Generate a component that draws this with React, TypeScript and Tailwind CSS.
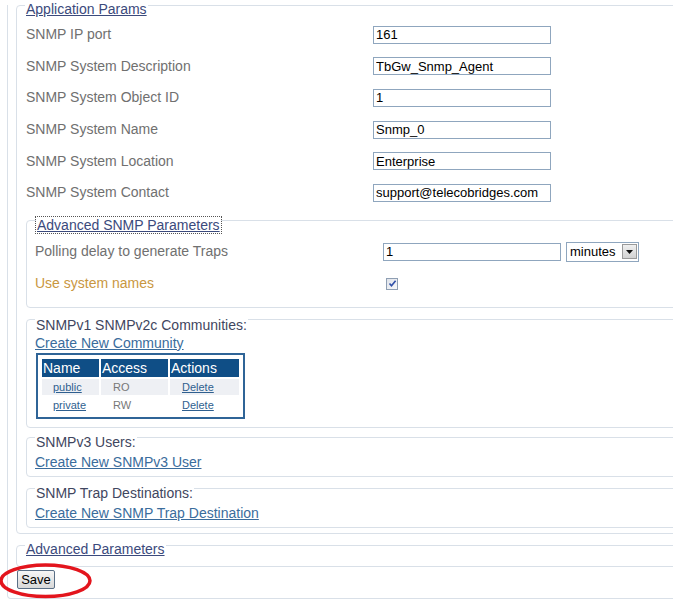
import type { ReactNode } from 'react'

const appRows: [string, string][] = [
  ['SNMP IP port', '161'],
  ['SNMP System Description', 'TbGw_Snmp_Agent'],
  ['SNMP System Object ID', '1'],
  ['SNMP System Name', 'Snmp_0'],
  ['SNMP System Location', 'Enterprise'],
  ['SNMP System Contact', 'support@telecobridges.com'],
]

const communities = [
  { name: 'public', access: 'RO' },
  { name: 'private', access: 'RW' },
]

function TextBox({ value }: { value: string }) {
  return (
    <input
      readOnly
      value={value}
      className="h-[18px] w-[178px] border border-[#8fa6be] bg-white px-[2px] text-[13px] leading-none text-black outline-none"
    />
  )
}

function Box({ className, children }: { className: string; children: ReactNode }) {
  return <section className={'rounded-[4px] border border-[#d9e0e8] ' + className}>{children}</section>
}

function SubBox({ title, link, top }: { title: string; link: string; top: string }) {
  return (
    <Box className={'ml-[9px] pb-[6px] ' + top}>
      <div className="-mt-[4px] ml-[8px] w-fit bg-white px-[1px] text-[14px] leading-[16px] text-[#3f4660]">{title}</div>
      <a className="mt-[4px] block w-fit pl-[8px] text-[14px] leading-[16px] text-[#3a6c9c] underline">{link}</a>
    </Box>
  )
}

export default function App() {
  return (
    <div className="relative h-[600px] w-[673px] overflow-hidden bg-white font-['Liberation_Sans',Arial,sans-serif]">
      <div className="ml-[7px] w-[720px] rounded-b-[4px] border-x border-b border-[#d9e0e8] pb-[9px] pl-[8px]">
        <Box className="mt-[5px] pb-[5px]">
          <div className="-mt-[5px] ml-[8px] w-fit bg-white px-[1px] text-[14px] leading-[16px] text-[#3b4a7c] underline">
            Application Params
          </div>
          <div className="mt-[2px] pl-[9px]">
            {appRows.map(([label, value]) => (
              <div key={label} className="flex h-[31.6px] items-center">
                <span className="w-[347px] text-[14px] text-[#707070]">{label}</span>
                <TextBox value={value} />
              </div>
            ))}
          </div>

          {/* advanced snmp */}
          <Box className="ml-[9px] mt-[11px] pb-[13px]">
            <div className="-mt-[4px] ml-[9px] w-fit bg-white px-[1px] text-[14px] leading-[16px] text-[#3b4a7c] underline outline-1 outline-dotted outline-[#555]">
              Advanced SNMP Parameters
            </div>
            <div className="mt-[9px] flex h-[20px] items-center pl-[8px]">
              <span className="w-[348px] text-[14px] text-[#707070]">Polling delay to generate Traps</span>
              <TextBox value="1" />
              <div className="ml-[5px] flex h-[20px] w-[73px] items-center justify-between border border-[#8fa6be] pl-[3px] pr-[1px] text-[13px] text-black">
                <span>minutes</span>
                <span className="flex h-[15px] w-[15px] items-center justify-center border border-[#9a9a9a] bg-linear-to-b from-[#f0f0f0] to-[#d2d2d2]">
                  <svg width="7" height="4" viewBox="0 0 7 4">
                    <path d="M0 0h7L3.5 4z" fill="#111" />
                  </svg>
                </span>
              </div>
            </div>
            <div className="mt-[12px] flex h-[20px] items-center pl-[8px]">
              <span className="w-[351px] text-[14px] text-[#c9973f]">Use system names</span>
              <span className="flex h-[12px] w-[12px] items-center justify-center border border-[#8f9fb3] bg-linear-to-br from-[#dfe3ea] to-[#f8f8fa]">
                <svg width="9" height="9" viewBox="0 0 9 9">
                  <path d="M1.5 4.5L3.5 6.8L7.6 1.8" fill="none" stroke="#2f4fa8" strokeWidth="1.6" />
                </svg>
              </span>
            </div>
          </Box>

          {/* communities */}
          <Box className="ml-[9px] mt-[11px] pb-[8px]">
            <div className="-mt-[3px] ml-[8px] w-fit bg-white px-[1px] text-[14px] leading-[16px] text-[#3f4660]">
              SNMPv1 SNMPv2c Communities:
            </div>
            <a className="mt-[2px] block w-fit pl-[8px] text-[14px] leading-[16px] text-[#3a6c9c] underline">
              Create New Community
            </a>
            <div className="ml-[9px] mt-[2px] w-fit border-2 border-[#2f6497] p-[4px]">
              <div className="grid grid-cols-[57px_67px_69px] gap-[2px]">
                {['Name', 'Access', 'Actions'].map((h) => (
                  <div key={h} className="h-[18px] bg-[#0f4e86] pl-[1px] text-[14px] leading-[18px] text-white">
                    {h}
                  </div>
                ))}
                {communities.map((c, i) => {
                  const bg = i === 0 ? 'bg-[#eef0f4]' : 'bg-white'
                  return [
                    <div key={c.name + 'n'} className={'h-[16px] pl-[11px] text-[11px] leading-[16px] ' + bg}>
                      <a className="text-[#2f5f8f] underline">{c.name}</a>
                    </div>,
                    <div key={c.name + 'a'} className={'h-[16px] pl-[12px] text-[11px] leading-[16px] text-[#777] ' + bg}>
                      {c.access}
                    </div>,
                    <div key={c.name + 'd'} className={'h-[16px] pl-[12px] text-[11px] leading-[16px] ' + bg}>
                      <a className="text-[#2f5f8f] underline">Delete</a>
                    </div>,
                  ]
                })}
              </div>
            </div>
          </Box>

          <SubBox title="SNMPv3 Users:" link="Create New SNMPv3 User" top="mt-[9px]" />
          <SubBox title="SNMP Trap Destinations:" link="Create New SNMP Trap Destination" top="mt-[11px]" />
        </Box>

        <Box className="mt-[11px] pb-[9px]">
          <div className="-mt-[5px] ml-[8px] w-fit bg-white px-[1px] text-[14px] leading-[16px] text-[#3b4a7c] underline">
            Advanced Parameters
          </div>
        </Box>

        <button className="ml-[1px] mt-[3px] block h-[19px] w-[38px] rounded-[2px] border border-[#5a6f86] bg-linear-to-b from-[#f6f6f6] to-[#d8d8d8] text-[13px] leading-none text-black">
          Save
        </button>
      </div>

      {/* annotation around the save button */}
      <svg className="absolute left-0 top-[560px]" width="100" height="40" viewBox="0 0 100 40">
        <ellipse cx="45.5" cy="20.8" rx="44.5" ry="15.75" fill="none" stroke="#e3151d" strokeWidth="3.5" />
      </svg>
    </div>
  )
}
